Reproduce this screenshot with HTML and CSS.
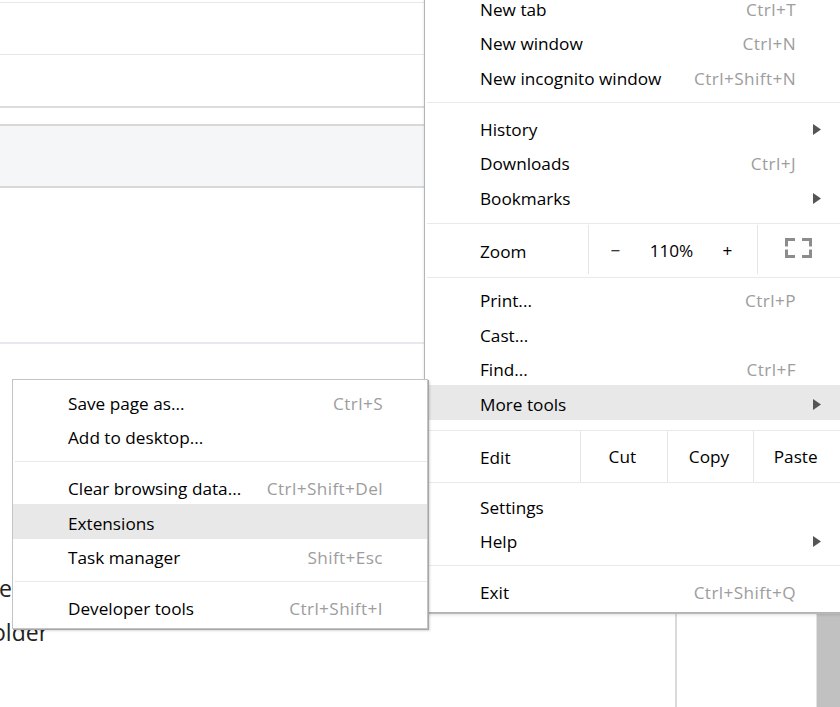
FILE: index.html
```html
<!DOCTYPE html>
<html>
<head>
<meta charset="utf-8">
<link rel="stylesheet" href="styles.css">
</head>
<body>
<div class="page">
  <div class="main-col">
    <div class="bg-top"></div>
    <div class="bg-a"></div>
    <div class="bg-b"></div>
    <div class="bg-gap"></div>
    <div class="bg-band"></div>
    <div class="bg-c"></div>
    <div class="bg-text">
      <div class="bg-line first">e</div>
      <div class="bg-line cut">older</div>
    </div>
  </div>
  <div class="gutter"></div>
  <div class="scrollbar"></div>
</div>

<div class="menu main-menu">
  <div class="item"><span class="label">New tab</span><span class="key">Ctrl+T</span><span class="arrow"></span></div>
  <div class="item"><span class="label">New window</span><span class="key">Ctrl+N</span><span class="arrow"></span></div>
  <div class="item"><span class="label">New incognito window</span><span class="key">Ctrl+Shift+N</span><span class="arrow"></span></div>
  <div class="sep"></div>
  <div class="item"><span class="label">History</span><span class="arrow"><svg width="8" height="11" viewBox="0 0 8 11"><path d="M0 0L8 5.5L0 11Z" fill="#555"/></svg></span></div>
  <div class="item"><span class="label">Downloads</span><span class="key">Ctrl+J</span><span class="arrow"></span></div>
  <div class="item"><span class="label">Bookmarks</span><span class="arrow"><svg width="8" height="11" viewBox="0 0 8 11"><path d="M0 0L8 5.5L0 11Z" fill="#555"/></svg></span></div>
  <div class="zoom-row">
    <div class="zoom-label">Zoom</div>
    <div class="zoom-ctrl">
      <div class="zbtn">−</div>
      <div class="zbtn">110%</div>
      <div class="zbtn">+</div>
    </div>
    <div class="fs">
      <svg width="27" height="20" viewBox="0 0 27 20" fill="none" stroke="#8c8c8c" stroke-width="3">
        <polyline points="1.5,8.5 1.5,1.5 10,1.5"/>
        <polyline points="17,1.5 25.5,1.5 25.5,8.5"/>
        <polyline points="1.5,11.5 1.5,18.5 10,18.5"/>
        <polyline points="17,18.5 25.5,18.5 25.5,11.5"/>
      </svg>
    </div>
  </div>
  <div class="item"><span class="label">Print...</span><span class="key">Ctrl+P</span><span class="arrow"></span></div>
  <div class="item"><span class="label">Cast...</span><span class="arrow"></span></div>
  <div class="item"><span class="label">Find...</span><span class="key">Ctrl+F</span><span class="arrow"></span></div>
  <div class="item hl"><span class="label">More tools</span><span class="arrow"><svg width="8" height="11" viewBox="0 0 8 11"><path d="M0 0L8 5.5L0 11Z" fill="#555"/></svg></span></div>
  <div class="edit-row">
    <div class="edit-label">Edit</div>
    <div class="ebtn">Cut</div>
    <div class="ebtn">Copy</div>
    <div class="ebtn">Paste</div>
  </div>
  <div class="item"><span class="label">Settings</span><span class="arrow"></span></div>
  <div class="item"><span class="label">Help</span><span class="arrow"><svg width="8" height="11" viewBox="0 0 8 11"><path d="M0 0L8 5.5L0 11Z" fill="#555"/></svg></span></div>
  <div class="sep"></div>
  <div class="item"><span class="label">Exit</span><span class="key">Ctrl+Shift+Q</span><span class="arrow"></span></div>
</div>

<div class="menu sub-menu">
  <div class="item"><span class="label">Save page as...</span><span class="key">Ctrl+S</span><span class="arrow"></span></div>
  <div class="item"><span class="label">Add to desktop...</span><span class="arrow"></span></div>
  <div class="sep"></div>
  <div class="item"><span class="label">Clear browsing data...</span><span class="key">Ctrl+Shift+Del</span><span class="arrow"></span></div>
  <div class="item hl"><span class="label">Extensions</span><span class="arrow"></span></div>
  <div class="item"><span class="label">Task manager</span><span class="key">Shift+Esc</span><span class="arrow"></span></div>
  <div class="sep"></div>
  <div class="item"><span class="label">Developer tools</span><span class="key">Ctrl+Shift+I</span><span class="arrow"></span></div>
</div>
</body>
</html>
```

FILE: styles.css
```css
body {
  margin: 0;
  width: 840px;
  height: 707px;
  overflow: hidden;
  position: relative;
  background: #fff;
  font-family: "Open Sans", "Noto Sans", sans-serif;
}

.page {
  display: flex;
  height: 707px;
}

.main-col {
  width: 675px;
  flex: none;
  border-right: 2px solid #dadada;
}

.gutter {
  flex: 1;
}

.scrollbar {
  width: 23px;
  flex: none;
  background: #c1c1c1;
  border-left: 1px solid #e2e2e2;
}

.bg-top {
  height: 2px;
  border-bottom: 1px solid #e7e7e7;
}

.bg-a {
  height: 51px;
  border-bottom: 1px solid #e7e7e7;
}

.bg-b {
  height: 51px;
  border-bottom: 2px solid #dcdcdc;
}

.bg-gap {
  height: 16px;
}

.bg-band {
  height: 60px;
  background: #f5f6f8;
  border-top: 2px solid #d8d8d8;
  border-bottom: 2px solid #d8d8d8;
}

.bg-c {
  height: 154px;
  border-bottom: 2px solid #e8e8ee;
}

.bg-text {
  margin-top: 222px;
  font-size: 23px;
  line-height: 44px;
  color: #222;
  white-space: nowrap;
}

.bg-line.first {
  text-indent: -1px;
}

.bg-line.cut {
  text-indent: -8px;
}

.menu {
  position: absolute;
  box-sizing: border-box;
  background: #fff;
  padding: 4px 0;
  font-size: 17.2px;
  color: #000;
}

.main-menu {
  left: 424px;
  top: -15px;
  width: 417px;
  border: 1px solid #b4b4b4;
  box-shadow: 0 1px 0 #b8b8b8, 0 2px 3px rgba(0, 0, 0, 0.12);
}

.sub-menu {
  left: 12px;
  top: 379px;
  width: 416px;
  border: 1px solid #c4c4c4;
  box-shadow: 1px 1px 0 #a6a6a6, 2px 2px 2px rgba(0, 0, 0, 0.15);
}

.item {
  display: flex;
  align-items: center;
  height: 34.5px;
  box-sizing: border-box;
  padding: 4px 0 0 55px;
  white-space: nowrap;
}

.item.hl {
  background: #e8e8e8;
}

.label {
  flex: 1;
}

.key {
  color: #9d9d9d;
  letter-spacing: 0.4px;
}

.arrow {
  width: 44px;
  flex: none;
  box-sizing: border-box;
  padding-left: 17px;
  display: flex;
  align-items: center;
}

.sep {
  height: 1px;
  background: #e9e9e9;
  margin: 8px 0 7.5px 2px;
}

.zoom-row {
  display: flex;
  height: 54.5px;
  box-sizing: border-box;
  border-top: 1px solid #e9e9e9;
  border-bottom: 1px solid #e9e9e9;
  margin: 9.5px 0 4px 2px;
}

.zoom-label {
  width: 161px;
  flex: none;
  box-sizing: border-box;
  padding: 2px 0 0 53px;
  display: flex;
  align-items: center;
}

.zoom-ctrl {
  width: 170px;
  flex: none;
  box-sizing: border-box;
  display: flex;
  border-left: 1px solid #e6e6e6;
  border-right: 1px solid #e6e6e6;
  margin: 1px 0 3px;
}

.zbtn {
  flex: 1;
  display: flex;
  align-items: center;
  justify-content: center;
  padding: 3px 3px 0 0;
}

.fs {
  flex: 1;
  display: flex;
  align-items: center;
  justify-content: center;
  padding-right: 2px;
}

.fs svg {
  margin-bottom: 5px;
}

.edit-row {
  display: flex;
  height: 53px;
  box-sizing: border-box;
  border-top: 1px solid #e9e9e9;
  border-bottom: 1px solid #e9e9e9;
  margin: 10px 0 5.5px 2px;
}

.edit-label {
  width: 153px;
  flex: none;
  box-sizing: border-box;
  padding: 2px 0 0 53px;
  display: flex;
  align-items: center;
}

.ebtn {
  flex: 1;
  display: flex;
  align-items: center;
  justify-content: center;
  padding: 1px 3px 0 0;
  border-left: 1px solid #e6e6e6;
}
```
